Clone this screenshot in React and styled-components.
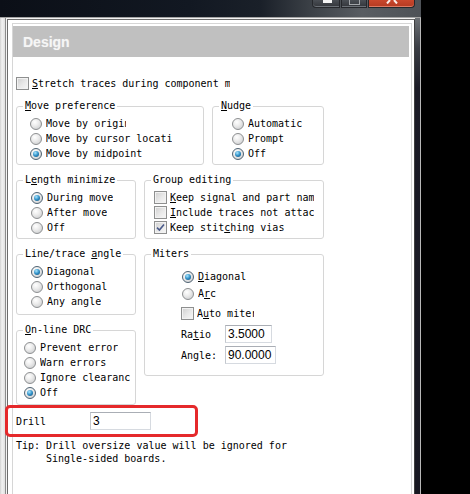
import React from "react";
import styled, { createGlobalStyle } from "styled-components";

const GlobalStyle = createGlobalStyle`
  html, body {
    margin: 0;
    padding: 0;
    background: #000;
  }
  body {
    width: 470px;
    height: 494px;
    overflow: hidden;
    font-family: "DejaVu Sans Mono", "Liberation Mono", monospace;
    font-size: 10px;
    color: #000;
  }
`;

const Window = styled.div`
  width: 421px;
  height: 494px;
  display: flex;
  flex-direction: column;
`;

const TitleBar = styled.div`
  height: 17px;
  display: flex;
  justify-content: flex-end;
  padding-right: 6px;
  background: linear-gradient(90deg, #0b0f17 0%, #121822 45%, #1a2029 62%, #3c4147 74%, #595d62 86%, #4e5257 100%);
`;

const CaptionGroup = styled.div`
  display: flex;
  gap: 1px;
  height: 8px;
  align-self: flex-start;
`;

const CaptionButton = styled.div`
  width: ${(p) => p.$w}px;
  box-sizing: border-box;
  border: 1px solid #26282c;
  border-top: none;
  border-radius: ${(p) => p.$radius};
  background: ${(p) =>
    p.$close
      ? "linear-gradient(180deg, #c9472c, #b43a22)"
      : "linear-gradient(180deg, #4a4e54, #33363b)"};
  box-shadow: inset 0 -1px 0 ${(p) => (p.$close ? "#dd7a63" : "#6b7076")};
  display: flex;
  justify-content: center;
  align-items: flex-start;
`;

const MinGlyph = styled.span`
  width: 9px;
  height: 3px;
  background: #f4f4f4;
  margin-left: 2px;
`;

const MaxGlyph = styled.span`
  width: 9px;
  height: 4px;
  border: 1px solid #a2a5a9;
  border-top: none;
`;

const WindowBody = styled.div`
  flex: 1;
  display: flex;
  min-height: 0;
  border-top: 1px solid #a4a4a4;
`;

const SideStrip = styled.div`
  width: 5px;
  border-right: 1px solid #8c8c8c;
  background: linear-gradient(90deg, #d0d0d0 0%, #f2f2f2 40%, #e0e0e0 100%);
`;

const DialogFrame = styled.div`
  flex: 1;
  display: flex;
  border-top: 1px solid #f4f4f4;
  border-left: 1px solid #f4f4f4;
  background: #fff;
`;

const DialogInner = styled.div`
  flex: 1;
  display: flex;
  border-top: 1px solid #6c6c6c;
  border-left: 1px solid #6c6c6c;
  border-right: 1px solid #3f3f3f;
  padding: 3px 2px 0 4px;
  background: #fff;
`;

const GlassEdge = styled.div`
  width: 5px;
  border-right: 1px solid #b8b8b8;
  background: linear-gradient(180deg, #6d7175 0px, #3a3d44 30px, #1b1b26 70px, #181822 100%);
`;

const Panel = styled.div`
  flex: 1;
  display: flex;
  flex-direction: column;
  border: 1px solid #d6d6d6;
  border-bottom: none;
  padding-top: 2px;
`;

const Header = styled.div`
  height: 31px;
  margin-right: 2px;
  padding-left: 10px;
  display: flex;
  align-items: center;
  background: #c0c0c0;
  color: #f6f6f6;
  font: bold 14px "Liberation Sans", Arial, sans-serif;
  text-shadow: 0 0 1px #d8d8d8;
`;

const Content = styled.div`
  display: flex;
  flex-direction: column;
  padding: 19px 0 0 3px;
`;

const Row = styled.div`
  display: flex;
  gap: 8px;
  margin-top: ${(p) => p.$mt || 0}px;
  align-items: ${(p) => p.$align || "stretch"};
`;

const Column = styled.div`
  display: flex;
  flex-direction: column;
  gap: 8px;
`;

const Group = styled.fieldset`
  margin: 0;
  padding: 0;
  min-width: 0;
  width: ${(p) => p.$w}px;
  box-sizing: border-box;
  border: 1px solid #d6d6d6;
  border-radius: 3px;
`;

const Legend = styled.legend`
  margin-left: 6px;
  padding: 0 2px;
  line-height: 14px;
  font-size: 10px;
`;

const GroupBody = styled.div`
  display: flex;
  flex-direction: column;
  gap: ${(p) => p.$gap || 0}px;
  padding: ${(p) => p.$pt ?? 3}px 0 ${(p) => p.$pb ?? 3}px ${(p) => p.$pl}px;
`;

const Control = styled.div`
  display: flex;
  align-items: center;
  height: ${(p) => p.$h || 15}px;
  white-space: nowrap;
`;

const Caption = styled.span`
  display: block;
  overflow: hidden;
  line-height: 15px;
  width: ${(p) => (p.$clip ? `${p.$clip}px` : "auto")};
`;

const Key = styled.u`
  text-decoration-thickness: 1px;
  text-underline-offset: 1px;
`;

const RadioDot = styled.span`
  flex: none;
  width: 12px;
  height: 12px;
  margin-right: 4px;
  box-sizing: border-box;
  border-radius: 50%;
  border: 1px solid ${(p) => (p.$on ? "#4e6272" : "#8d8f91")};
  background: radial-gradient(circle at 38% 32%, #ffffff 0%, #ececec 40%, #c4c6c8 100%);
  display: flex;
  align-items: center;
  justify-content: center;

  &::after {
    content: "";
    display: ${(p) => (p.$on ? "block" : "none")};
    width: 6px;
    height: 6px;
    border-radius: 50%;
    background: radial-gradient(circle at 38% 32%, #a8e6ff 0%, #2f8fc6 50%, #124a73 100%);
  }
`;

const CheckBox = styled.span`
  flex: none;
  width: 13px;
  height: 13px;
  margin-right: 3px;
  margin-left: ${(p) => p.$shift || 0}px;
  box-sizing: border-box;
  border: 1px solid #8e8f8f;
  background: linear-gradient(135deg, #cfcfcf 0%, #e9e9e9 55%, #f7f7f7 100%);
  box-shadow: inset 0 0 0 1px #f2f2f2;
  display: flex;
  align-items: center;
  justify-content: center;
`;

const FieldRow = styled.div`
  display: flex;
  align-items: center;
  height: 18px;
  margin-top: ${(p) => p.$mt || 0}px;
`;

const FieldLabel = styled.span`
  width: ${(p) => p.$w}px;
  margin-left: ${(p) => p.$shift || 0}px;
  line-height: 15px;
`;

const TextBox = styled.input`
  width: ${(p) => p.$w}px;
  height: 18px;
  box-sizing: border-box;
  margin: 0;
  padding: 0 0 0 2px;
  border: 1px solid #d6dae0;
  border-top-color: #aaaeb5;
  border-left-color: #c4c8ce;
  outline: none;
  background: #fff;
  color: #000;
  font: 12px "Liberation Sans", Arial, sans-serif;
`;

const DrillBox = styled.div`
  display: flex;
  align-items: center;
  width: 193px;
  height: 32px;
  box-sizing: border-box;
  margin: 0 0 0 -11px;
  padding-left: 8px;
  border: 3px solid #e5292b;
  border-radius: 5px;
`;

const Tip = styled.div`
  margin-top: 2px;
  line-height: 13px;
  white-space: nowrap;
`;

const TipMore = styled.div`
  padding-left: 30px;
`;

function Radio({ on, children, clip }) {
  return (
    <Control>
      <RadioDot $on={on} />
      <Caption $clip={clip}>{children}</Caption>
    </Control>
  );
}

function Check({ on, children, clip, shift }) {
  return (
    <Control>
      <CheckBox $shift={shift}>
        {on && (
          <svg width="9" height="9" viewBox="0 0 9 9">
            <path d="M1 4.6 L3.4 7 L8 1.4" fill="none" stroke="#4a5a8a" strokeWidth="1.6" />
          </svg>
        )}
      </CheckBox>
      <Caption $clip={clip}>{children}</Caption>
    </Control>
  );
}

function CloseGlyph() {
  return (
    <svg width="12" height="4" viewBox="0 0 12 4">
      <path d="M4 0 L1 3.5 M8 0 L11 3.5" stroke="#fbeee9" strokeWidth="2" fill="none" />
    </svg>
  );
}

export default function App() {
  return (
    <>
      <GlobalStyle />
      <Window>
        <TitleBar>
          <CaptionGroup>
            <CaptionButton $w={28} $radius="0 0 0 4px">
              <MinGlyph />
            </CaptionButton>
            <CaptionButton $w={26} $radius="0">
              <MaxGlyph />
            </CaptionButton>
            <CaptionButton $w={47} $radius="0 0 4px 0" $close>
              <CloseGlyph />
            </CaptionButton>
          </CaptionGroup>
        </TitleBar>
        <WindowBody>
          <SideStrip />
          <DialogFrame>
            <DialogInner>
              <Panel>
                <Header>Design</Header>
                <Content>
                  <Check clip={198}>
                    <Key>S</Key>tretch traces during component moves
                  </Check>

                  <Row $mt={8}>
                    <Group $w={188}>
                      <Legend>
                        <Key>M</Key>ove preference
                      </Legend>
                      <GroupBody $pl={13}>
                        <Radio clip={80}>Move by origin</Radio>
                        <Radio clip={126}>Move by cursor location</Radio>
                        <Radio on>Move by midpoint</Radio>
                      </GroupBody>
                    </Group>
                    <Group $w={112}>
                      <Legend>
                        <Key>N</Key>udge
                      </Legend>
                      <GroupBody $pl={19}>
                        <Radio>Automatic</Radio>
                        <Radio>Prompt</Radio>
                        <Radio on>Off</Radio>
                      </GroupBody>
                    </Group>
                  </Row>

                  <Row $mt={8}>
                    <Group $w={120}>
                      <Legend>
                        L<Key>e</Key>ngth minimize
                      </Legend>
                      <GroupBody $pl={14}>
                        <Radio on>During move</Radio>
                        <Radio>After move</Radio>
                        <Radio>Off</Radio>
                      </GroupBody>
                    </Group>
                    <Group $w={180}>
                      <Legend>Group editing</Legend>
                      <GroupBody $pl={9}>
                        <Check clip={144}>
                          <Key>K</Key>eep signal and part names
                        </Check>
                        <Check clip={144}>
                          <Key>I</Key>nclude traces not attached
                        </Check>
                        <Check on>
                          Keep stit<Key>c</Key>hing vias
                        </Check>
                      </GroupBody>
                    </Group>
                  </Row>

                  <Row $mt={8} $align="flex-start">
                    <Column>
                      <Group $w={120}>
                        <Legend>
                          Line/trace <Key>a</Key>ngle
                        </Legend>
                        <GroupBody $pl={14} $pb={5}>
                          <Radio on>Diagonal</Radio>
                          <Radio>Orthogonal</Radio>
                          <Radio>Any angle</Radio>
                        </GroupBody>
                      </Group>
                      <Group $w={120}>
                        <Legend>
                          <Key>O</Key>n-line DRC
                        </Legend>
                        <GroupBody $pl={7} $pb={4}>
                          <Radio clip={78}>Prevent errors</Radio>
                          <Radio>Warn errors</Radio>
                          <Radio clip={90}>Ignore clearance</Radio>
                          <Radio on>Off</Radio>
                        </GroupBody>
                      </Group>
                    </Column>
                    <Group $w={180}>
                      <Legend>Miters</Legend>
                      <GroupBody $pl={37} $pt={8} $pb={11} $gap={2}>
                        <Radio on>
                          <Key>D</Key>iagonal
                        </Radio>
                        <Radio>
                          A<Key>r</Key>c
                        </Radio>
                        <Control $h={20}>
                          <CheckBox $shift={-1} />
                          <Caption $clip={57}>
                            A<Key>u</Key>to miter
                          </Caption>
                        </Control>
                        <FieldRow>
                          <FieldLabel $w={44} $shift={-1}>
                            Ra<Key>t</Key>io
                          </FieldLabel>
                          <TextBox $w={47} defaultValue="3.5000" readOnly />
                        </FieldRow>
                        <FieldRow $mt={1}>
                          <FieldLabel $w={44} $shift={-1}>
                            An<Key>g</Key>le:
                          </FieldLabel>
                          <TextBox $w={51} defaultValue="90.0000" readOnly />
                        </FieldRow>
                      </GroupBody>
                    </Group>
                  </Row>

                  <DrillBox>
                    <FieldLabel $w={74}>Drill</FieldLabel>
                    <TextBox $w={61} defaultValue="3" readOnly />
                  </DrillBox>

                  <Tip>
                    Tip: Drill oversize value will be ignored for
                    <TipMore>Single-sided boards.</TipMore>
                  </Tip>
                </Content>
              </Panel>
            </DialogInner>
          </DialogFrame>
          <GlassEdge />
        </WindowBody>
      </Window>
    </>
  );
}
